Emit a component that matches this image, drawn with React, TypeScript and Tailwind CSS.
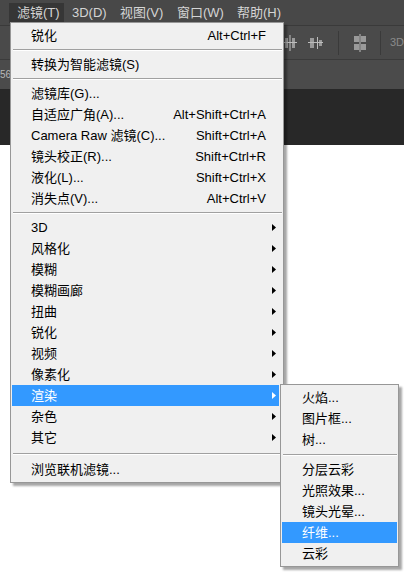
import React from "react";

type Item =
  | { type: "sep" }
  | { type: "item"; label: string; shortcut?: string; sub?: boolean; active?: boolean };

const mainItems: Item[] = [
  { type: "item", label: "锐化", shortcut: "Alt+Ctrl+F" },
  { type: "sep" },
  { type: "item", label: "转换为智能滤镜(S)" },
  { type: "sep" },
  { type: "item", label: "滤镜库(G)..." },
  { type: "item", label: "自适应广角(A)...", shortcut: "Alt+Shift+Ctrl+A" },
  { type: "item", label: "Camera Raw 滤镜(C)...", shortcut: "Shift+Ctrl+A" },
  { type: "item", label: "镜头校正(R)...", shortcut: "Shift+Ctrl+R" },
  { type: "item", label: "液化(L)...", shortcut: "Shift+Ctrl+X" },
  { type: "item", label: "消失点(V)...", shortcut: "Alt+Ctrl+V" },
  { type: "sep" },
  { type: "item", label: "3D", sub: true },
  { type: "item", label: "风格化", sub: true },
  { type: "item", label: "模糊", sub: true },
  { type: "item", label: "模糊画廊", sub: true },
  { type: "item", label: "扭曲", sub: true },
  { type: "item", label: "锐化", sub: true },
  { type: "item", label: "视频", sub: true },
  { type: "item", label: "像素化", sub: true },
  { type: "item", label: "渲染", sub: true, active: true },
  { type: "item", label: "杂色", sub: true },
  { type: "item", label: "其它", sub: true },
  { type: "sep" },
  { type: "item", label: "浏览联机滤镜..." },
];

const subItems: Item[] = [
  { type: "item", label: "火焰..." },
  { type: "item", label: "图片框..." },
  { type: "item", label: "树..." },
  { type: "sep" },
  { type: "item", label: "分层云彩" },
  { type: "item", label: "光照效果..." },
  { type: "item", label: "镜头光晕..." },
  { type: "item", label: "纤维...", active: true },
  { type: "item", label: "云彩" },
];

const font = { fontFamily: '"Liberation Sans", "Noto Sans CJK SC", sans-serif' };

function Arrow({ white }: { white?: boolean }) {
  return (
    <svg width="4" height="7" viewBox="0 0 4 7" className="block">
      <path d="M0 0 L4 3.5 L0 7 Z" fill={white ? "#ffffff" : "#000000"} />
    </svg>
  );
}

function Sep({ h = "h-[8px]" }: { h?: string }) {
  return (
    <div className={`${h} ml-[2px] mr-[1px] flex flex-col justify-center`}>
      <div className="h-px bg-[#a0a0a0]" />
      <div className="h-px bg-white" />
    </div>
  );
}

export default function App() {
  return (
    <div className="relative w-[404px] h-[572px] overflow-hidden bg-white text-[13px]" style={font}>
      {/* Menu bar */}
      <div className="h-[26px] bg-[#484848] border-b border-[#3a3a3a] flex pl-[9px] pt-[3px] text-[#d4d4d4]">
        <div className="w-[55px] h-[20px] pl-2 bg-[#363636] flex items-center">滤镜(T)</div>
        <div className="w-[48px] h-[20px] pl-2 flex items-center">3D(D)</div>
        <div className="w-[57px] h-[20px] pl-2 flex items-center">视图(V)</div>
        <div className="w-[60px] h-[20px] pl-2 flex items-center">窗口(W)</div>
        <div className="h-[20px] pl-2 flex items-center">帮助(H)</div>
      </div>

      {/* Options toolbar */}
      <div className="h-[34px] bg-[#4a4a4a] border-b border-[#3b3b3b] flex items-center">
        <div className="w-[283px]" />
        <svg width="14" height="18" viewBox="0 0 14 18">
          <rect x="2" y="4" width="3" height="10" fill="#9a9a9a" />
          <rect x="9" y="4" width="3" height="10" fill="#9a9a9a" />
          <rect x="6.5" y="1" width="1" height="16" fill="#bdbdbd" />
          <rect x="0" y="8" width="14" height="1" fill="#bdbdbd" />
        </svg>
        <div className="w-[11px]" />
        <svg width="15" height="18" viewBox="0 0 15 18">
          <rect x="2" y="4" width="4" height="10" fill="#9a9a9a" />
          <rect x="9" y="3" width="1" height="12" fill="#bdbdbd" />
          <rect x="11" y="6" width="3" height="6" fill="#9a9a9a" />
          <rect x="0" y="8" width="15" height="1" fill="#bdbdbd" />
        </svg>
        <div className="w-[15px]" />
        <div className="w-px h-[24px] bg-[#3a3a3a]" />
        <div className="w-[14px]" />
        <svg width="14" height="18" viewBox="0 0 14 18">
          <rect x="1" y="2" width="5" height="6" fill="#9a9a9a" />
          <rect x="8" y="2" width="5" height="6" fill="#9a9a9a" />
          <rect x="1" y="10" width="5" height="6" fill="#9a9a9a" />
          <rect x="8" y="10" width="5" height="6" fill="#9a9a9a" />
          <rect x="6.5" y="0" width="1" height="18" fill="#bdbdbd" />
        </svg>
        <div className="w-[13px]" />
        <div className="w-px h-[24px] bg-[#3a3a3a]" />
        <div className="w-[9px]" />
        <span className="text-[11px] text-[#8a8a8a]">3D</span>
      </div>

      {/* Tab bar */}
      <div className="h-[29px] bg-[#4b4b4b] flex items-center">
        <span className="text-[10px] text-[#b8b8b8]">56</span>
      </div>
      <div className="h-[56px] bg-[#282828]" />

      {/* Filter menu */}
      <div className="absolute left-[10px] top-[22px] w-[274px] bg-[#f0f0f0] border border-[#979797] py-[2px] shadow-[3px_3px_2px_rgba(0,0,0,0.35)] text-black">
        {mainItems.map((it, i) =>
          it.type === "sep" ? (
            <Sep key={i} h={i === mainItems.length - 2 ? "h-[11px]" : "h-[8px]"} />
          ) : (
            <div
              key={i}
              className={`h-[21px] ml-px mr-[4px] flex items-center pl-[19px] ${
                it.active ? "bg-[#3399ff] text-white" : ""
              }`}
            >
              <span className="flex-1 whitespace-nowrap">{it.label}</span>
              {it.shortcut && <span className="whitespace-nowrap">{it.shortcut}</span>}
              <div className="w-[13px] pl-[6px] flex items-center">
                {it.sub && <Arrow white={it.active} />}
              </div>
            </div>
          )
        )}
      </div>

      {/* Render submenu */}
      <div className="absolute left-[280px] top-[384px] w-[119px] bg-[#f0f0f0] border border-[#979797] py-[2px] shadow-[3px_3px_2px_rgba(0,0,0,0.35)] text-black">
        {subItems.map((it, i) =>
          it.type === "sep" ? (
            <Sep key={i} h="h-[9px]" />
          ) : (
            <div
              key={i}
              className={`h-[21px] mx-px flex items-center pl-[20px] ${
                it.active ? "bg-[#3399ff] text-white" : ""
              }`}
            >
              <span className="whitespace-nowrap">{it.label}</span>
            </div>
          )
        )}
      </div>
    </div>
  );
}
